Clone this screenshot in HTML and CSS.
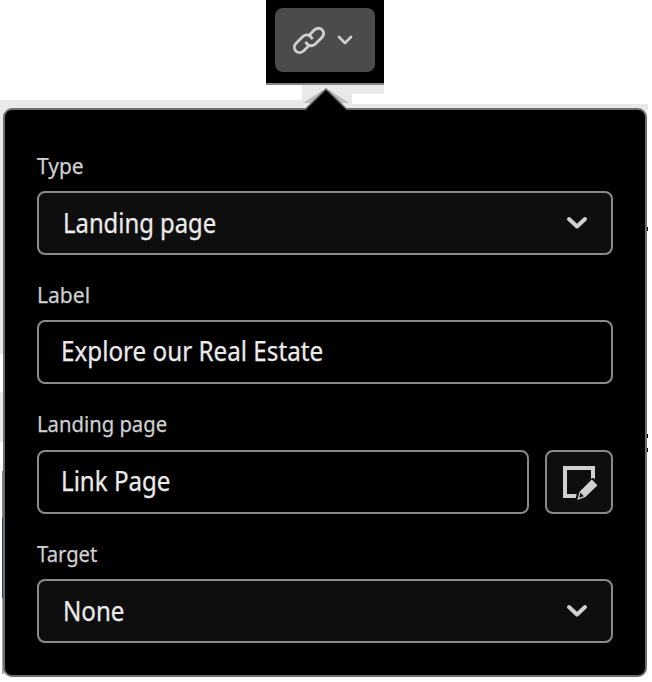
FILE: index.html
```html
<!DOCTYPE html>
<html lang="en">
<head>
<meta charset="utf-8">
<title>Link settings</title>
<link rel="stylesheet" href="styles.css">
</head>
<body>
<div class="canvas-edge" aria-hidden="true"><i class="strip strip-left"></i><i class="strip strip-mid"></i><i class="strip strip-peak"></i><i class="strip strip-right"></i><i class="edge"></i><i class="tick tick-a"></i><i class="tick tick-b"></i><i class="tick tick-c"></i></div>
<header class="toolbar">
  <button class="link-button" aria-label="Link">
    <svg class="chain" width="36" height="36" viewBox="0 0 36 36" fill="none" stroke="#d0d0d0" stroke-width="2.8">
      <path d="M17.4 13.9 L23.2 8.1 C25.5 5.8 29 5.6 31.1 7.7 C33.2 9.8 33.2 13.2 30.9 15.5 L24.6 21.8 C21.4 25 16.5 24.2 14.6 19.8"/>
      <path d="M18.8 22.7 L12.8 28.7 C10.5 31 7 31.2 4.9 29.1 C2.8 27 2.8 23.6 5.1 21.3 L11.6 14.8 C14.8 11.6 19.8 12.6 21.4 17.2"/>
    </svg>
    <svg class="small-chevron" width="18" height="12" viewBox="0 0 18 12" fill="none" stroke="#d0d0d0" stroke-width="2.6" stroke-linecap="round" stroke-linejoin="round"><path d="M3 3 L9 9 L15 3"/></svg>
  </button>
</header>
<main class="popover">
  <svg class="pointer" width="46" height="23" viewBox="0 0 46 23"><path d="M0 15 L20 2 H26 L46 15Z" fill="#bdbdbd"/><path d="M2 22 L23 1 L44 22V23H2Z"/><path d="M2 21.5 L23 1 L44 21.5" fill="none" stroke="#6e6e6e" stroke-width="1.5"/></svg>
  <section class="field">
    <div class="label"><span class="label-type">Type</span></div>
    <div class="control select"><span class="value-page">Landing page</span><svg class="chevron" width="24" height="18" viewBox="0 0 24 18"><path d="M4 5 L12 12.5 L20 5"/></svg></div>
  </section>
  <section class="field field-label">
    <div class="label"><span class="label-label">Label</span></div>
    <div class="control input"><span class="value-explore">Explore our Real Estate</span></div>
  </section>
  <section class="field field-page">
    <div class="label"><span class="label-page">Landing page</span></div>
    <div class="row">
      <div class="control input"><span class="value-link">Link Page</span></div>
      <button class="edit" aria-label="Edit landing page">
        <svg width="36" height="36" viewBox="0 0 36 36"><path d="M14.8 32 H2 V0 H34 V13 C32.2 11.5 31.2 11.8 30 13 V4 H6 V28 H15.7Z" fill="#d0d0d0"/><path d="M31.3 14 L36 18.7 Q36.4 19.3 35.8 19.9 L24.4 31 L16.3 34 L18.6 25.7 L30 14.2 Q30.6 13.5 31.3 14Z" fill="#d0d0d0"/><path d="M19.6 26.5 L22.8 30.2 L18.2 31.8Z" fill="#0e0e0e"/></svg>
      </button>
    </div>
  </section>
  <section class="field">
    <div class="label"><span class="label-target">Target</span></div>
    <div class="control select"><span class="value-none">None</span><svg class="chevron" width="24" height="18" viewBox="0 0 24 18"><path d="M4 5 L12 12.5 L20 5"/></svg></div>
  </section>
</main>
</body>
</html>
```

FILE: styles.css
```css
* { box-sizing: border-box; }
body { margin: 0; height: 682px; overflow: hidden; background: #fff; font-family: "Noto Sans", "Open Sans", sans-serif; }
button { padding: 0; font: inherit; }
svg { display: block; flex: none; }

.toolbar { position: relative; width: 118px; height: 85px; margin-left: 266px; padding: 8px 9px; background: #000; border-bottom: 2px solid #858585; }
.link-button { display: flex; align-items: center; width: 100px; height: 64px; padding-left: 16px; gap: 9px; border: 0; border-radius: 8px; background: #4b4b4b; }

.popover { position: relative; width: 644px; height: 569px; margin: 23px 0 0 3px; padding: 42px 32px 0; border: 2px solid #6e6e6e; border-radius: 9px; background: #000; }
.pointer { position: absolute; left: 298px; top: -22px; }

.field { height: 129px; }
.field-label { height: 130px; }
.label { height: 39px; line-height: 27px; font-size: 22.5px; color: #d0d0d0; white-space: nowrap; }
.field-page .label { line-height: 26px; }
.label span, .control span { display: inline-block; transform-origin: 0 50%; transform: scaleX(.9); -webkit-text-stroke: .25px currentColor; }
.label .label-type { transform: scaleX(.93); }
.label .label-label { transform: scaleX(.935); }
.control { display: flex; align-items: center; height: 64px; border: 2px solid #8a8a8a; border-radius: 8px; font-size: 26.5px; line-height: 36px; color: #ebebeb; white-space: nowrap; }
.control .value-explore { transform: scaleX(.914); }
.control .value-link, .control .value-none { transform: scaleX(.91); }
.select { justify-content: space-between; padding: 0 22px 0 24px; background: #0e0e0e; }
.input { padding: 0 22px 2px; background: #000; }
.chevron { fill: none; stroke: #d0d0d0; stroke-width: 4; stroke-linecap: round; stroke-linejoin: round; }
.row { display: flex; gap: 16px; }
.row .control { flex: 1; }
.edit { display: grid; place-items: center; width: 68px; height: 64px; padding-top: 4px; border: 2px solid #8a8a8a; border-radius: 8px; background: #0e0e0e; }

/* Parts of the editing canvas that show around the popover. */
.canvas-edge i { position: absolute; background: #e9e9e9; }
.strip-left { left: 0; top: 100px; width: 302px; height: 10px; }
.strip-mid { left: 302px; top: 85px; width: 82px; height: 9px; }
.strip-peak { left: 302px; top: 85px; width: 50px; height: 25px; }
.strip-right { left: 352px; top: 104px; width: 296px; height: 6px; }
.canvas-edge .edge { left: 0; top: 110px; width: 4px; height: 564px; background: linear-gradient(#e9e9e9 0 244px, #fff 244px 282px, #e9e9e9 282px 332px, #fff 332px 361px, #888 361px 408px, #214852 408px 488px, #aaa 488px); clip-path: polygon(0 0, 100% 0, 100% 100%, 2px 100%, 2px 332px, 0 332px); }
.canvas-edge .tick { z-index: 1; left: 647px; width: 1px; height: 4px; background: #000; }
.tick-a { top: 227px; }
.tick-b { top: 434px; }
.tick-c { top: 448px; }
```
